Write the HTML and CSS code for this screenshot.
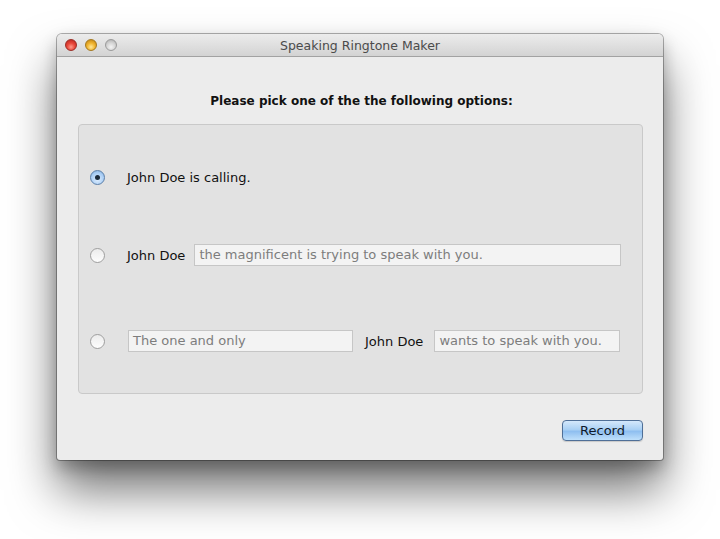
FILE: index.html
```html
<!DOCTYPE html>
<html>
<head>
<meta charset="utf-8">
<link rel="stylesheet" href="styles.css">
</head>
<body>
<div class="window">
  <div class="titlebar">
    <div class="lights">
      <span class="light red"></span>
      <span class="light yellow"></span>
      <span class="light gray"></span>
    </div>
    <div class="title">Speaking Ringtone Maker</div>
  </div>
  <div class="content">
    <div class="heading">Please pick one of the the following options:</div>
    <div class="group">
      <div class="row row1">
        <span class="radio checked"><span class="dot"></span></span>
        <span class="label">John Doe is calling.</span>
      </div>
      <div class="row row2">
        <span class="radio"></span>
        <span class="label">John Doe</span>
        <span class="field f-long">the magnificent is trying to speak with you.</span>
      </div>
      <div class="row row3">
        <span class="radio"></span>
        <span class="field f-first">The one and only</span>
        <span class="label">John Doe</span>
        <span class="field f-last">wants to speak with you.</span>
      </div>
    </div>
    <div class="actions">
      <button class="record">Record</button>
    </div>
  </div>
</div>
</body>
</html>
```
FILE: styles.css
```css
html, body {
  margin: 0;
  padding: 0;
  background: #ffffff;
}
body {
  width: 720px;
  height: 539px;
  overflow: hidden;
  font-family: "DejaVu Sans", "Liberation Sans", sans-serif;
  padding-top: 34px;
  box-sizing: border-box;
}
.window {
  margin-left: 57px;
  width: 606px;
  height: 426px;
  background: #ececec;
  border-radius: 5px 5px 3px 3px;
  box-shadow: 0 0 0 1px rgba(0,0,0,0.3), 0 30px 48px rgba(0,0,0,0.55), 0 8px 16px rgba(0,0,0,0.25);
  display: flex;
  flex-direction: column;
  overflow: hidden;
}
.titlebar {
  height: 22px;
  flex: none;
  position: relative;
  background: linear-gradient(#ececec, #d3d3d3);
  border-bottom: 1px solid #a2a2a2;
  display: flex;
  align-items: center;
  justify-content: center;
}
.lights {
  position: absolute;
  left: 8px;
  top: 5px;
  display: flex;
  gap: 8px;
}
.light {
  width: 12px;
  height: 12px;
  border-radius: 50%;
  box-sizing: border-box;
}
.light.red {
  background: radial-gradient(circle at 50% 70%, #ff9a8a 0, #e8473a 45%, #b3211a 100%);
  border: 1px solid #9b2c25;
}
.light.yellow {
  background: radial-gradient(circle at 50% 70%, #ffe89a 0, #f1b530 45%, #b97c10 100%);
  border: 1px solid #a4781c;
}
.light.gray {
  background: radial-gradient(circle at 50% 70%, #f4f4f4 0, #d4d4d4 50%, #a9a9a9 100%);
  border: 1px solid #9a9a9a;
}
.title {
  font-size: 12.5px;
  color: #4b4b4b;
  padding-top: 1px;
}
.content {
  flex: 1;
  display: flex;
  flex-direction: column;
  padding: 0 20px 0 21px;
}
.heading {
  text-align: center;
  font-weight: bold;
  font-size: 12px;
  color: #111;
  margin-top: 37px;
  height: 15px;
  line-height: 15px;
  padding-left: 2px;
}
.group {
  margin-top: 15px;
  height: 270px;
  box-sizing: border-box;
  background: #e2e2e2;
  border: 1px solid #c9c9c9;
  border-radius: 4px;
  display: flex;
  flex-direction: column;
}
.row {
  display: flex;
  align-items: center;
  font-size: 13px;
  color: #111;
}
.row1 { margin-top: 43px; height: 18px; }
.row2 { margin-top: 58px; height: 22px; }
.row3 { margin-top: 64px; height: 22px; }
.radio {
  width: 15px;
  height: 15px;
  box-sizing: border-box;
  border-radius: 50%;
  border: 1px solid #9e9e9e;
  background: linear-gradient(#ececec, #fdfdfd);
  margin-left: 11px;
  margin-right: 22px;
  flex: none;
  display: flex;
  align-items: center;
  justify-content: center;
}
.radio.checked {
  border-color: #5b7fa8;
  background: radial-gradient(circle at 50% 65%, #e0efff 0, #a9cdf4 60%, #7fabdc 100%);
}
.dot {
  width: 5px;
  height: 5px;
  border-radius: 50%;
  background: #1b2a3a;
}
.label {
  white-space: nowrap;
}
.row2 .label { margin-right: 9px; }
.field {
  height: 22px;
  box-sizing: border-box;
  border: 1px solid #c6c6c6;
  background: #f3f3f3;
  color: #7d7d7d;
  font-size: 13px;
  line-height: 20px;
  padding-left: 4px;
  white-space: nowrap;
  overflow: hidden;
}
.f-long { flex: 1; margin-right: 21px; }
.f-first { width: 225px; margin-left: 1px; margin-right: 12px; }
.f-last { width: 186px; margin-left: 11px; }
.actions {
  display: flex;
  justify-content: flex-end;
  margin-top: 26px;
}
.record {
  width: 81px;
  height: 21px;
  font-family: "DejaVu Sans", "Liberation Sans", sans-serif;
  font-size: 13px;
  color: #0f1a2a;
  border: 1px solid #4f6f97;
  border-radius: 4px;
  background: linear-gradient(#d4e8fb 0%, #a9d0f4 45%, #8fbff0 55%, #bfe0fb 100%);
  padding: 0;
  box-shadow: 0 1px 1px rgba(0,0,0,0.15);
}
```
